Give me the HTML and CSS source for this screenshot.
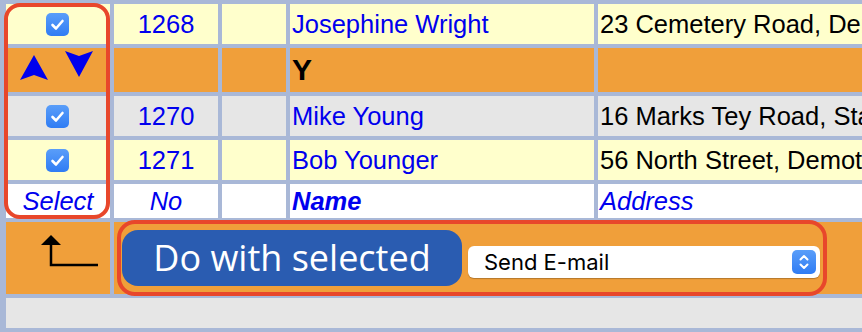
FILE: index.html
```html
<!DOCTYPE html>
<html>
<head>
<meta charset="utf-8">
<link rel="stylesheet" href="styles.css">
</head>
<body>
<div class="grid">
  <div class="cell cream center"><span class="cb"><svg viewBox="0 0 23 23" width="23" height="23"><path d="M6.5 12 L10 15.5 L16.5 8" fill="none" stroke="#fff" stroke-width="2.6" stroke-linecap="round" stroke-linejoin="round"/></svg></span></div>
  <div class="cell cream center link">1268</div>
  <div class="cell cream"></div>
  <div class="cell cream link left">Josephine Wright</div>
  <div class="cell cream left">23 Cemetery Road, Demotown</div>

  <div class="cell orange arrows"><svg width="104" height="44" viewBox="0 0 104 44"><path d="M28 7 L42 32 L28 27 L14 32 Z" fill="#0000ee"/><path d="M59 3 L73 8 L87 3 L73 29 Z" fill="#0000ee"/></svg></div>
  <div class="cell orange"></div>
  <div class="cell orange"></div>
  <div class="cell orange left letter">Y</div>
  <div class="cell orange"></div>

  <div class="cell gray center"><span class="cb"><svg viewBox="0 0 23 23" width="23" height="23"><path d="M6.5 12 L10 15.5 L16.5 8" fill="none" stroke="#fff" stroke-width="2.6" stroke-linecap="round" stroke-linejoin="round"/></svg></span></div>
  <div class="cell gray center link">1270</div>
  <div class="cell gray"></div>
  <div class="cell gray link left">Mike Young</div>
  <div class="cell gray left">16 Marks Tey Road, Stanway</div>

  <div class="cell cream center"><span class="cb"><svg viewBox="0 0 23 23" width="23" height="23"><path d="M6.5 12 L10 15.5 L16.5 8" fill="none" stroke="#fff" stroke-width="2.6" stroke-linecap="round" stroke-linejoin="round"/></svg></span></div>
  <div class="cell cream center link">1271</div>
  <div class="cell cream"></div>
  <div class="cell cream link left">Bob Younger</div>
  <div class="cell cream left">56 North Street, Demotown</div>

  <div class="cell white center link head">Select</div>
  <div class="cell white center link head">No</div>
  <div class="cell white"></div>
  <div class="cell white left link head bold">Name</div>
  <div class="cell white left link head">Address</div>

  <div class="cell orange back"><svg width="104" height="72" viewBox="0 0 104 72"><path d="M45 13 L55 23 L35 23 Z" fill="#000"/><path d="M45 22 V43 H92" fill="none" stroke="#000" stroke-width="2.5"/></svg></div>
  <div class="cell orange actions">
    <div class="group">
      <button class="do">Do with selected</button>
      <div class="sel"><span class="sel-text">Send E-mail</span><span class="sel-arrow"><svg width="24" height="24" viewBox="0 0 24 24"><path d="M8.5 9.5 L12 6 L15.5 9.5" fill="none" stroke="#fff" stroke-width="2" stroke-linecap="round" stroke-linejoin="round"/><path d="M8.5 14.5 L12 18 L15.5 14.5" fill="none" stroke="#fff" stroke-width="2" stroke-linecap="round" stroke-linejoin="round"/></svg></span></div>
    </div>
  </div>

  <div class="cell gray full"></div>

  <div class="ring"></div>
</div>
</body>
</html>
```

FILE: styles.css
```css
html, body {
  margin: 0;
  padding: 0;
  overflow: hidden;
  background: #a9b8d7;
}
body {
  width: 862px;
  height: 332px;
  font-family: "Liberation Sans", Arial, sans-serif;
}
.grid {
  position: relative;
  display: grid;
  grid-template-columns: 104px 104px 64px 304px 264px;
  grid-template-rows: 40px 44px 40px 40px 34px 72px 30px;
  gap: 4px;
  padding: 4px 0 4px 6px;
  width: 862px;
  box-sizing: border-box;
}
.cell {
  font-size: 25.5px;
  line-height: 40px;
  white-space: nowrap;
  overflow: hidden;
  color: #000;
}
.cream { background: #ffffcc; }
.orange { background: #f09f3a; }
.gray { background: #e6e6e6; }
.white { background: #ffffff; }
.center { text-align: center; display: flex; align-items: center; justify-content: center; }
.left { padding-left: 2px; }
.link { color: #0000ee; }
.letter { font-weight: bold; font-size: 30px; line-height: 44px; }
.head { font-style: italic; line-height: 34px; }
.bold { font-weight: bold; }
.arrows svg, .back svg { display: block; }
.cb {
  width: 23px;
  height: 23px;
  border-radius: 5px;
  background: linear-gradient(#5a9ef9, #2f7cf4);
  display: block;
  margin-left: -1px;
}
.cb svg { display: block; }
.actions {
  grid-column: 2 / 6;
  overflow: visible;
}
.group {
  position: relative;
  margin-left: 3px;
  width: 710px;
  height: 72px;
  box-sizing: border-box;
  padding-left: 5px;
  display: flex;
  align-items: flex-start;
  gap: 6px;
}
.group::before {
  content: "";
  position: absolute;
  left: 0;
  right: 0;
  top: -2px;
  bottom: -2px;
  border: 4px solid #e8472b;
  border-radius: 18px;
  pointer-events: none;
}
.do {
  margin-top: 8px;
  width: 340px;
  height: 56px;
  border: none;
  border-radius: 16px;
  background: #2a5cb1;
  color: #fff;
  font-family: "Open Sans", sans-serif;
  font-size: 36px;
  line-height: 56px;
  padding: 0;
  text-align: center;
}
.sel {
  margin-top: 24px;
  width: 352px;
  height: 32px;
  background: #fff;
  border-radius: 6px;
  box-shadow: 0 1px 1px rgba(0,0,0,0.25);
  display: flex;
  align-items: center;
  justify-content: space-between;
  padding: 0 4px 0 16px;
  box-sizing: border-box;
}
.sel-text {
  font-family: "Inter", sans-serif;
  font-size: 22px;
  color: #000;
  line-height: 32px;
}
.sel-arrow {
  width: 24px;
  height: 24px;
  border-radius: 5px;
  background: linear-gradient(#5a9ef9, #2f7cf4);
  display: block;
}
.sel-arrow svg { display: block; }
.full { grid-column: 1 / 6; }
.ring {
  position: absolute;
  grid-column: 1 / 2;
  grid-row: 1 / 6;
  top: -1px;
  bottom: -1px;
  left: -2px;
  right: 0;
  border: 4px solid #e8472b;
  border-radius: 16px;
  pointer-events: none;
  z-index: 2;
}
```
